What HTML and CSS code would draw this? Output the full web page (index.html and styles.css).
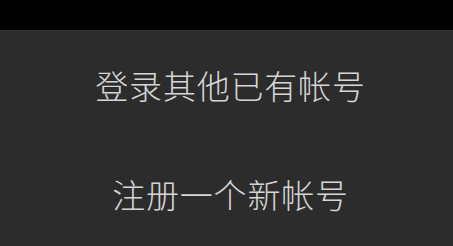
FILE: index.html
```html
<!DOCTYPE html>
<html lang="zh-CN">
<head>
<meta charset="utf-8">
<link rel="stylesheet" href="styles.css">
</head>
<body>
<div class="statusbar"></div>
<div class="sheet">
  <div class="item">登录其他已有帐号</div>
  <div class="item">注册一个新帐号</div>
</div>
</body>
</html>
```
FILE: styles.css
```css
html, body {
  margin: 0;
  padding: 0;
  background: #2c2c2c;
  width: 453px;
  height: 246px;
  overflow: hidden;
}
.statusbar {
  height: 30px;
  background: #000;
  border-bottom: 1px solid #353535;
}
.sheet {
  display: flex;
  flex-direction: column;
}
.item {
  height: 108px;
  padding-left: 8px;
  display: flex;
  align-items: center;
  justify-content: center;
  color: #d6d6d6;
  font-family: "Noto Sans CJK SC", "Noto Sans", sans-serif;
  font-weight: 300;
  font-size: 33px;
  letter-spacing: 0.8px;
  border-bottom: 1px solid #303030;
}
```
